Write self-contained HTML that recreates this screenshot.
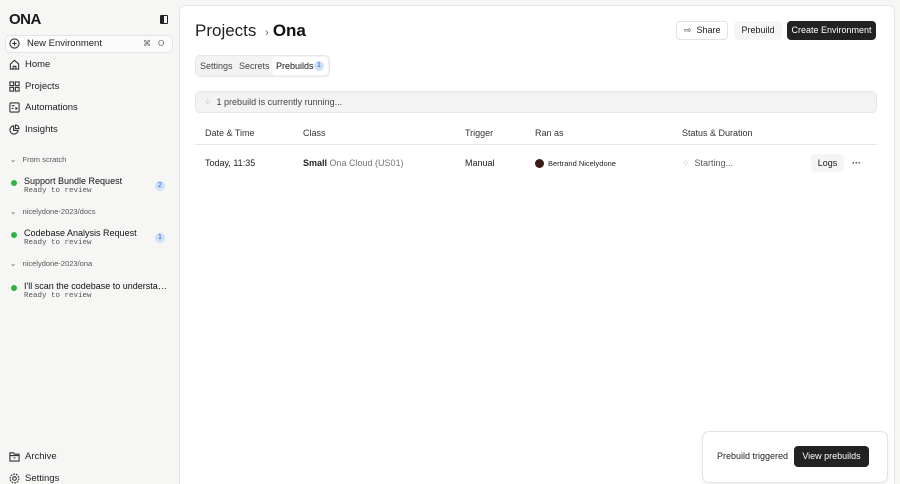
<!DOCTYPE html>
<html><head><style>
*{box-sizing:border-box;margin:0;padding:0}
html,body{width:900px;height:484px;overflow:hidden}
body{background:#f6f6f5;font-family:"Liberation Sans",sans-serif;color:#1a1a1a;position:relative;font-size:9px}
.abs{position:absolute}
.side .it{position:absolute;left:9px;display:flex;align-items:center;gap:5px;font-size:9.5px;color:#222}
.side svg{width:11px;height:11px;stroke:#333;fill:none;stroke-width:1.2}
.grp{position:absolute;left:10px;font-size:7.5px;color:#555}
.task{position:absolute;left:11px}
.task .dot{position:absolute;left:0;top:4px;width:6px;height:6px;border-radius:50%;background:#2fb344}
.task .t{position:absolute;left:13px;top:0;font-size:9px;white-space:nowrap;color:#111;width:144px;overflow:hidden;text-overflow:ellipsis}
.task .s{position:absolute;left:13px;top:11px;font-family:"Liberation Mono",monospace;font-size:7.5px;color:#555;white-space:nowrap}
.badge{position:absolute;width:10px;height:10px;border-radius:50%;background:#cfe0fb;color:#2a5bd7;font-size:7px;text-align:center;line-height:10px}
.main{position:absolute;left:179px;top:5px;width:716px;height:484px;background:#fff;border:1px solid #e6e6e6;border-radius:6px}
.th{position:absolute;top:122px;font-size:9px;color:#333}
.td{position:absolute;top:152px;font-size:9px;color:#222}
</style></head><body>
<div class="side">
<div class="abs" style="left:9px;top:11px;font-size:15px;font-weight:bold;letter-spacing:-0.5px">ONA</div>
<div class="abs" style="left:160px;top:15px;width:8px;height:9px;border:1.3px solid #222;border-radius:1px"><div style="width:3px;height:100%;background:#222"></div></div>
<div class="abs" style="left:5px;top:35px;width:168px;height:18px;background:#fbfbfb;border:1px solid #e4e4e4;border-radius:5px"></div>
<div class="it" style="top:38px"><svg viewBox="0 0 12 12"><circle cx="6" cy="6" r="5"/><path d="M6 3.5v5M3.5 6h5"/></svg><span style="margin-left:2px">New Environment</span></div>
<div class="abs" style="left:143px;top:39px;font-size:8px;color:#666">⌘</div>
<div class="abs" style="left:158px;top:39px;font-size:8px;color:#666">O</div>
<div class="it" style="top:59px"><svg viewBox="0 0 12 12"><path d="M1.5 5.5L6 1.5l4.5 4V11h-9z M4.5 11V8h3v3"/></svg>Home</div>
<div class="it" style="top:81px"><svg viewBox="0 0 12 12"><rect x="1" y="1" width="4" height="4"/><rect x="7" y="1" width="4" height="4"/><rect x="1" y="7" width="4" height="4"/><rect x="7" y="7" width="4" height="4"/></svg>Projects</div>
<div class="it" style="top:102px"><svg viewBox="0 0 12 12"><rect x="1" y="1" width="10" height="10" rx="1"/><path d="M3 4h3M3 7h2M7 6l2 2M9 6l-2 2"/></svg>Automations</div>
<div class="it" style="top:124px"><svg viewBox="0 0 12 12"><path d="M5 2a4.5 4.5 0 1 0 5 5H5z M7 1v4h4A4 4 0 0 0 7 1z"/></svg>Insights</div>
<div class="grp" style="top:155px">⌄&nbsp;&nbsp; From scratch</div>
<div class="task" style="top:176px"><div class="dot"></div><div class="t">Support Bundle Request</div><div class="s">Ready to review</div></div>
<div class="badge" style="left:155px;top:181px">2</div>
<div class="grp" style="top:207px">⌄&nbsp;&nbsp; nicelydone-2023/docs</div>
<div class="task" style="top:228px"><div class="dot"></div><div class="t">Codebase Analysis Request</div><div class="s">Ready to review</div></div>
<div class="badge" style="left:155px;top:233px">1</div>
<div class="grp" style="top:259px">⌄&nbsp;&nbsp; nicelydone-2023/ona</div>
<div class="task" style="top:281px"><div class="dot"></div><div class="t">I'll scan the codebase to understand the</div><div class="s">Ready to review</div></div>
<div class="it" style="top:451px"><svg viewBox="0 0 12 12"><path d="M1 2h4l1 1.5h5V11H1z M1 5h10 M5 7.5h2"/></svg>Archive</div>
<div class="it" style="top:473px"><svg viewBox="0 0 12 12"><circle cx="6" cy="6" r="2"/><circle cx="6" cy="6" r="4.8" stroke-dasharray="2 1"/></svg>Settings</div>
</div>

<div class="main">
<div class="abs" style="left:15px;top:15px;font-size:17px;color:#222">Projects <span style="font-size:11px;color:#666;margin:0 4px">›</span><b style="color:#111">Ona</b></div>
<div class="abs" style="left:496px;top:15px;width:52px;height:19px;border:1px solid #e3e3e3;border-radius:4px;font-size:9px;line-height:17px;padding-left:7px"><span style="color:#444">⇨</span>&nbsp; Share</div>
<div class="abs" style="left:554px;top:15px;width:48px;height:19px;background:#f5f5f5;border-radius:4px;font-size:9px;line-height:19px;text-align:center">Prebuild</div>
<div class="abs" style="left:607px;top:15px;width:89px;height:19px;background:#222;color:#fff;border-radius:4px;font-size:9px;line-height:19px;text-align:center">Create Environment</div>
<div class="abs" style="left:15px;top:49px;width:135px;height:22px;background:#f3f3f3;border:1px solid #e6e6e6;border-radius:5px"></div>
<div class="abs" style="left:92px;top:51px;width:56px;height:18px;background:#fff;border-radius:4px"></div>
<div class="abs" style="left:20px;top:55px;font-size:9px;color:#444">Settings</div>
<div class="abs" style="left:59px;top:55px;font-size:9px;color:#444">Secrets</div>
<div class="abs" style="left:96px;top:55px;font-size:9px;color:#111">Prebuilds</div>
<div class="badge" style="left:134px;top:55px">1</div>
<div class="abs" style="left:15px;top:85px;width:682px;height:22px;background:#f3f3f3;border:1px solid #e6e6e6;border-radius:5px;font-size:9px;color:#444;line-height:20px;padding-left:8px"><span style="color:#aaa">⁘</span>&nbsp; 1 prebuild is currently running...</div>
<div class="th" style="left:25px">Date &amp; Time</div>
<div class="th" style="left:123px">Class</div>
<div class="th" style="left:285px">Trigger</div>
<div class="th" style="left:355px">Ran as</div>
<div class="th" style="left:502px">Status &amp; Duration</div>
<div class="abs" style="left:15px;top:138px;width:682px;height:1px;background:#e6e6e6"></div>
<div class="td" style="left:25px">Today, 11:35</div>
<div class="td" style="left:123px"><b>Small</b> <span style="color:#777">Ona Cloud (US01)</span></div>
<div class="td" style="left:285px">Manual</div>
<div class="abs" style="left:355px;top:153px;width:9px;height:9px;border-radius:50%;background:#3a1a14"></div>
<div class="td" style="left:368px;font-size:7.5px;top:153px">Bertrand Nicelydone</div>
<div class="td" style="left:502px;color:#555"><span style="color:#aaa">⁘</span>&nbsp; Starting...</div>
<div class="abs" style="left:631px;top:148px;width:33px;height:18px;background:#f5f5f5;border-radius:4px;font-size:9px;line-height:18px;text-align:center">Logs</div>
<div class="td" style="left:672px;top:152px;font-weight:bold">···</div>
</div>

<div class="abs" style="left:702px;top:431px;width:186px;height:52px;background:#fff;border:1px solid #e3e3e3;border-radius:7px;box-shadow:0 2px 6px rgba(0,0,0,.06)"></div>
<div class="abs" style="left:717px;top:451px;font-size:9px;color:#222">Prebuild triggered</div>
<div class="abs" style="left:794px;top:446px;width:75px;height:21px;background:#222;color:#fff;border-radius:4px;font-size:9px;line-height:21px;text-align:center">View prebuilds</div>
</body></html>
